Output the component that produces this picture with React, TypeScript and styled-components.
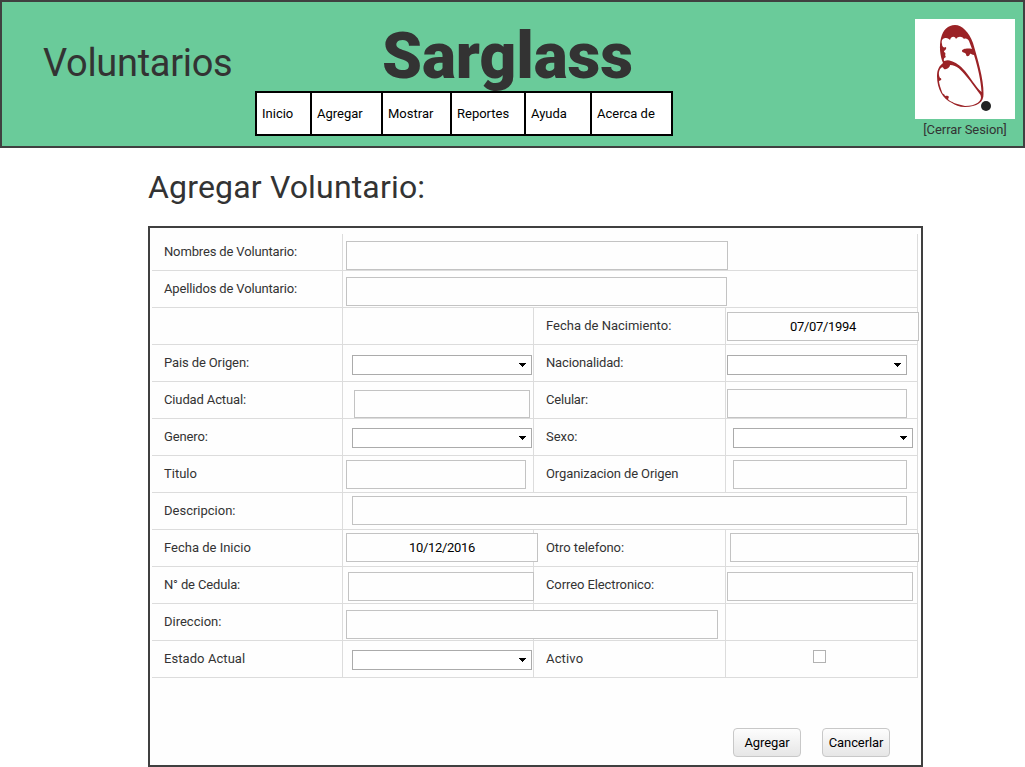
import React from 'react';
import styled, { createGlobalStyle } from 'styled-components';

const Global = createGlobalStyle`
  *, *::before, *::after { box-sizing: border-box; }
  html, body { margin: 0; padding: 0; }
  body {
    background: #fff;
    color: #333;
    font-family: Roboto, "Liberation Sans", sans-serif;
    font-size: 13px;
    height: 767px;
    overflow: hidden;
  }
`;

const Header = styled.header`
  display: grid;
  grid-template-columns: 253px 418px 1fr;
  height: 148px;
  border: 2px solid #404040;
  background: #6acb9a;
`;

const SectionTitle = styled.h2`
  margin: 0;
  padding: 37px 0 0 41px;
  font-size: 38px;
  font-weight: 400;
  line-height: 48px;
  letter-spacing: -0.3px;
  white-space: nowrap;
`;

const Center = styled.div`
  display: flex;
  flex-direction: column;
`;

const Brand = styled.h1`
  margin: 0;
  padding: 15px 0 0 127px;
  height: 89px;
  font-size: 64px;
  font-weight: 900;
  line-height: 80px;
  letter-spacing: -0.1px;
  white-space: nowrap;
`;

const Nav = styled.nav`
  display: flex;
  position: relative;
  height: 45px;
  border: 2px solid #000;
  background: #fff;
`;

const NavItem = styled.a<{ $w: number }>`
  width: ${(p) => p.$w}px;
  padding-left: 5px;
  border-right: 2px solid #000;
  color: #000;
  line-height: 41px;
  white-space: nowrap;
  &:last-child { border-right: 0; }
`;

const Account = styled.div`
  display: flex;
  flex-direction: column;
  align-items: center;
  justify-self: end;
  width: 100px;
  margin: 17px 8px 0 0;
`;

const Logo = styled.svg`
  display: block;
  width: 100px;
  height: 100px;
  background: #fff;
`;

const Logout = styled.a`
  line-height: 22px;
  letter-spacing: -0.07px;
  white-space: nowrap;
`;

const Main = styled.main`
  width: 775px;
  margin-left: 148px;
`;

const PageTitle = styled.h2`
  margin: 0;
  padding-top: 18px;
  height: 78px;
  font-size: 32px;
  font-weight: 400;
  line-height: 42px;
  letter-spacing: 0.17px;
`;

const Panel = styled.form`
  display: flex;
  flex-direction: column;
  height: 541px;
  padding: 6px 4px 0 2px;
  border: 2px solid #404040;
  background: #fefefe;
`;

const Row = styled.div`
  display: grid;
  grid-template-columns: 191px 191px 192px 192px;
  width: 766px;
  height: 37px;
`;

const Cell = styled.div<{ $span?: number }>`
  grid-column: span ${(p) => p.$span ?? 1};
  min-width: 0;
  display: flex;
  align-items: flex-start;
  border-right: 1px solid #dcdcdc;
  border-bottom: 1px solid #dcdcdc;
`;

const Label = styled.label<{ $track: number }>`
  padding-left: 12px;
  line-height: 36px;
  letter-spacing: ${(p) => p.$track}px;
  white-space: nowrap;
`;

type Box = { $w: number; $x: number; $y: number; $h?: number };

const Field = styled.input<Box>`
  position: relative;
  flex: none;
  width: ${(p) => p.$w}px;
  height: ${(p) => p.$h ?? 29}px;
  margin: ${(p) => p.$y}px 0 0 ${(p) => p.$x}px;
  padding: 0;
  border: 1px solid #c3c3c3;
  border-radius: 0;
  outline: 0;
  background: #fefefe;
  color: #000;
  font: 13px Roboto, "Liberation Sans", sans-serif;
  letter-spacing: -0.3px;
  text-align: center;
`;

const SelectBox = styled.div<Box>`
  display: flex;
  flex: none;
  align-items: center;
  justify-content: flex-end;
  width: ${(p) => p.$w}px;
  height: 20px;
  margin: ${(p) => p.$y}px 0 0 ${(p) => p.$x}px;
  padding-right: 5px;
  border: 1px solid #ababab;
  background: #fff;
`;

const Check = styled.input`
  appearance: none;
  flex: none;
  width: 13px;
  height: 13px;
  margin: 9px 0 0 87px;
  border: 1px solid #b2b2b2;
  background: #fff;
`;

const Actions = styled.div`
  display: flex;
  gap: 21px;
  padding: 50px 0 0 581px;
`;

const Button = styled.button`
  width: 68px;
  height: 29px;
  padding: 0;
  border: 1px solid #c8c8c8;
  border-radius: 4px;
  background: linear-gradient(#fdfdfd, #e6e6e6);
  color: #000;
  font: 13px Roboto, "Liberation Sans", sans-serif;
  letter-spacing: -0.1px;
`;

const Select = (p: Box) => (
  <SelectBox {...p} role="listbox">
    <svg width="7" height="4" viewBox="0 0 7 4" shapeRendering="crispEdges">
      <path d="M0 0h7v1H0zM1 1h5v1H1zM2 2h3v1H2zM3 3h1v1H3z" fill="#000" />
    </svg>
  </SelectBox>
);

const Text = ({ children, track = 0 }: { children?: React.ReactNode; track?: number }) => (
  <Cell>
    <Label $track={track}>{children}</Label>
  </Cell>
);

const menu: [string, number][] = [
  ['Inicio', 55],
  ['Agregar', 71],
  ['Mostrar', 69],
  ['Reportes', 74],
  ['Ayuda', 66],
  ['Acerca de', 79],
];

export default function App() {
  return (
    <>
      <Global />
      <Header>
        <SectionTitle>Voluntarios</SectionTitle>
        <Center>
          <Brand>Sarglass</Brand>
          <Nav>
            {menu.map(([name, w]) => (
              <NavItem key={name} $w={w}>{name}</NavItem>
            ))}
          </Nav>
        </Center>
        <Account>
          <Logo viewBox="0 0 100 100">
            <path
              fill="#9b2226"
              fillRule="evenodd"
              d="M40 6C47 6 54 13 58 24C62 38 69 60 68.500 75C69 83 62 88 50 88C44 88 40 86 37 84C28 80 22 70 22 57C22 51 24 47 28 44C25 37 24 27 26 19C28 11 33 6 40 6Z
                 M27 25C26 21 28 19 31 19C33 19 34 20 35 21C36 17 40 17 41 20C43 17 47 17 49 20C51 19 53 20 54 22L57 30C52 29 47 30 47 32C47 34 50 33 51 35C51 38 54 38 55 35C56 34 57 36 59 36C63 49 66 62 66.500 73C60 67 56 59 50 52C45 46 40 43 36 42C34 41 32 41 29 42C29 41 28 39 31 38C29 36 32 34 29 33C29 31 32 31 31 28C29 29 27 28 27 25Z
                 M26 49C27 48 28 48 29 50C32 51 35 48 35 46C42 46 46 51 51 57C57 64 61 70 65.500 76C68 82 61 87 50 87C46 86 42 85 39 84C37 82 35 83 33 80C35 77 33 76 30 77C29 74 28 76 27 73C26 70 24 65 24 62C28 61 26 59 25 59C23 55 24 51 26 49Z"
            />
            <circle cx="71" cy="87" r="5" fill="#222" />
          </Logo>
          <Logout>[Cerrar Sesion]</Logout>
        </Account>
      </Header>
      <Main>
        <PageTitle>Agregar Voluntario:</PageTitle>
        <Panel>
          <Row>
            <Text track={-0.15}>Nombres de Voluntario:</Text>
            <Cell $span={3}><Field $w={382} $x={3} $y={7} /></Cell>
          </Row>
          <Row>
            <Text track={-0.15}>Apellidos de Voluntario:</Text>
            <Cell $span={3}><Field $w={381} $x={3} $y={6} /></Cell>
          </Row>
          <Row>
            <Cell />
            <Cell />
            <Text>Fecha de Nacimiento:</Text>
            <Cell><Field $w={192} $x={1} $y={4} defaultValue="07/07/1994" /></Cell>
          </Row>
          <Row>
            <Text track={-0.12}>Pais de Origen:</Text>
            <Cell><Select $w={180} $x={9} $y={10} /></Cell>
            <Text track={-0.15}>Nacionalidad:</Text>
            <Cell><Select $w={180} $x={1} $y={10} /></Cell>
          </Row>
          <Row>
            <Text track={-0.13}>Ciudad Actual:</Text>
            <Cell><Field $w={176} $x={11} $y={8} $h={28} /></Cell>
            <Text track={-0.2}>Celular:</Text>
            <Cell><Field $w={180} $x={1} $y={7} /></Cell>
          </Row>
          <Row>
            <Text track={-0.12}>Genero:</Text>
            <Cell><Select $w={180} $x={9} $y={9} /></Cell>
            <Text>Sexo:</Text>
            <Cell><Select $w={180} $x={7} $y={9} /></Cell>
          </Row>
          <Row>
            <Text>Titulo</Text>
            <Cell><Field $w={180} $x={3} $y={4} /></Cell>
            <Text track={-0.1}>Organizacion de Origen</Text>
            <Cell><Field $w={174} $x={7} $y={4} /></Cell>
          </Row>
          <Row>
            <Text>Descripcion:</Text>
            <Cell $span={3}><Field $w={555} $x={9} $y={3} /></Cell>
          </Row>
          <Row>
            <Text>Fecha de Inicio</Text>
            <Cell><Field $w={192} $x={3} $y={3} defaultValue="10/12/2016" /></Cell>
            <Text track={-0.07}>Otro telefono:</Text>
            <Cell><Field $w={189} $x={4} $y={3} /></Cell>
          </Row>
          <Row>
            <Text track={-0.15}>N° de Cedula:</Text>
            <Cell><Field $w={186} $x={5} $y={5} /></Cell>
            <Text track={-0.1}>Correo Electronico:</Text>
            <Cell><Field $w={186} $x={1} $y={5} /></Cell>
          </Row>
          <Row>
            <Text>Direccion:</Text>
            <Cell><Field $w={372} $x={3} $y={6} /></Cell>
            <Cell />
            <Cell />
          </Row>
          <Row>
            <Text track={0.07}>Estado Actual</Text>
            <Cell><Select $w={180} $x={9} $y={9} /></Cell>
            <Text track={0.15}>Activo</Text>
            <Cell><Check type="checkbox" /></Cell>
          </Row>
          <Actions>
            <Button type="button">Agregar</Button>
            <Button type="button">Cancerlar</Button>
          </Actions>
        </Panel>
      </Main>
    </>
  );
}
